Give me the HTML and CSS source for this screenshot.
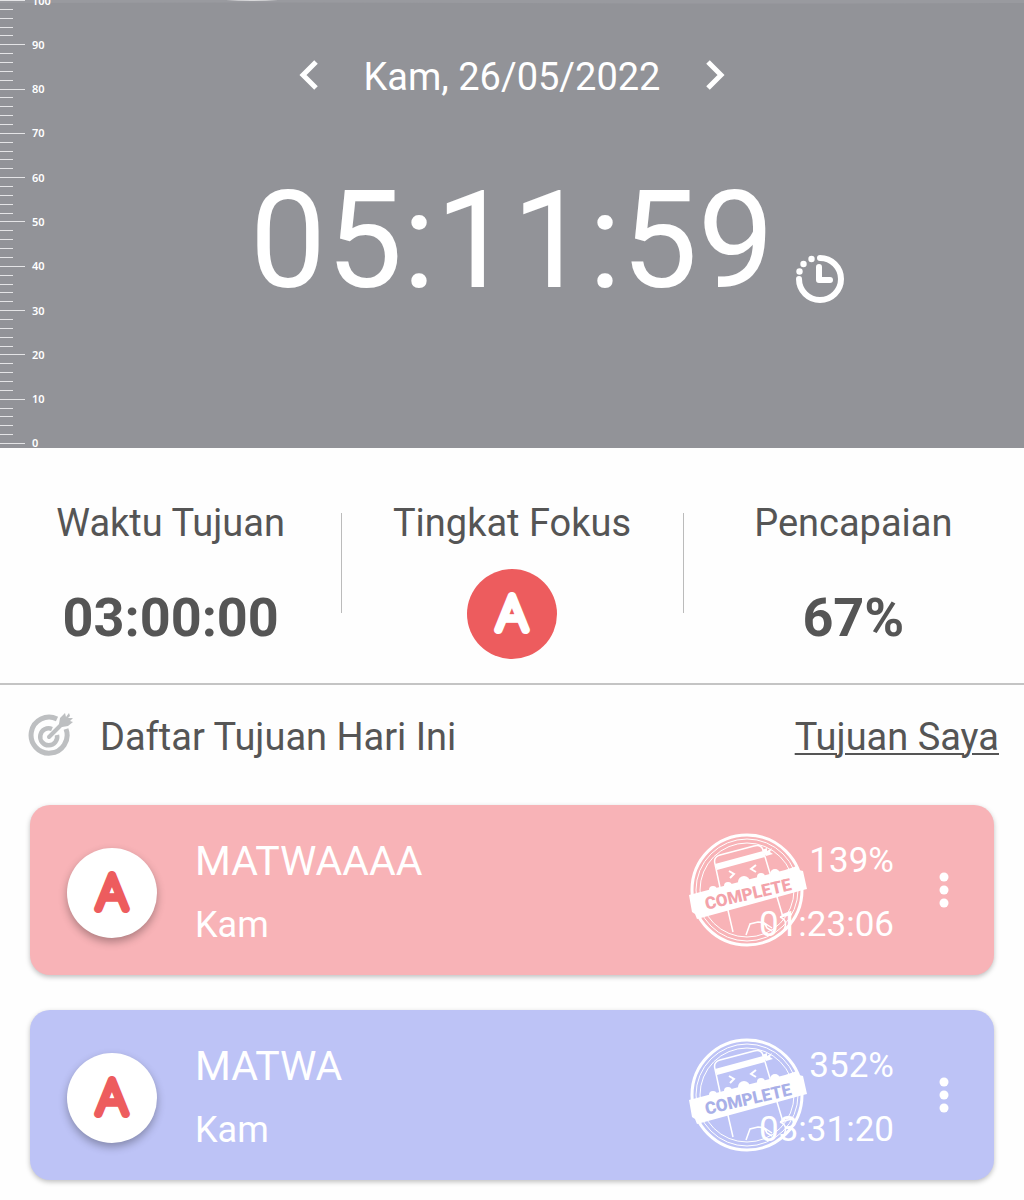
FILE: index.html
```html
<!DOCTYPE html>
<html lang="id">

<head>
    <meta charset="utf-8">
    <meta name="viewport" content="width=device-width, initial-scale=1">
    <title>Tujuan Hari Ini</title>
    <link rel="stylesheet" href="styles.css">
</head>

<body>
    <!-- shared drawings -->
    <svg class="sprite" aria-hidden="true">
        <symbol id="stamp" viewBox="0 0 120 120">
            <g fill="none" stroke="#fff">
                <circle cx="60" cy="60" r="55" stroke-width="3" />
                <circle cx="60" cy="60" r="51" stroke-width="1" />
                <circle cx="60" cy="60" r="47" stroke-width="1" />
                <path d="M34 62 L28 34 Q26 27 33 25 L67 16 Q74 14 76 20 L96 87 M40 76 L46 102 M93 87 L105 84" stroke-width="1.5" />
                <path d="M42 41 l5 3 -4 4 M69 35 l-5 4 5 3" stroke-width="2" />
                <path d="M59 105 l4 -11 8 -2 q7 0 9 6 l5 3 M76 92 l9 6 M93 87 q10 4 2 16" stroke-width="1.5" />
            </g>
            <path d="M28 34 L76 21 78 27 30 40 Z M75 20 l5 -2 0 3 5 -3 -2 4 3 2 -7 2 Z" fill="#fff" />
            <g fill="#fff">
                <circle cx="26" cy="60" r="4" />
                <circle cx="41" cy="56" r="4" />
                <circle cx="57" cy="52" r="6" />
                <circle cx="74" cy="47" r="4" />
                <circle cx="88" cy="44" r="5" />
                <path d="M2 65 L98 40 110 36 112 40 116 41 120 59 116 60 98 65 10 89 8 84 5 82 Z" />
            </g>
            <text class="stamp-text" x="61" y="70" text-anchor="middle" transform="rotate(-13 61 64)">COMPLETE</text>
        </symbol>
        <symbol id="dots" viewBox="0 0 12 36">
            <circle cx="6" cy="5" r="4.500" />
            <circle cx="6" cy="18" r="4.500" />
            <circle cx="6" cy="31" r="4.500" />
        </symbol>
    </svg>

    <header class="timer-panel">
        <svg class="wave" viewBox="0 0 1024 4" preserveAspectRatio="none" aria-hidden="true">
            <path d="M0 0 H1024 V3 Q700 4 500 3 T0 3 Z" fill="#999a9f" />
            <path d="M226 0 H278 Q250 2 226 0 Z" fill="#d8d8da" />
        </svg>
        <div class="ruler" id="ruler"></div>
        <div class="date-row">
            <button type="button" class="arrow" aria-label="Hari sebelumnya">
                <svg width="20" height="30" viewBox="0 0 20 30"><path d="M18 2 L5 15 L18 28" /></svg>
            </button>
            <span class="date">Kam, 26/05/2022</span>
            <button type="button" class="arrow" aria-label="Hari berikutnya">
                <svg width="20" height="30" viewBox="0 0 20 30"><path d="M2 2 L15 15 L2 28" /></svg>
            </button>
        </div>
        <div class="clock-row">
            <span class="clock">05:11:59</span>
            <button type="button" class="clock-button" aria-label="Riwayat waktu">
                <svg width="48" height="48" viewBox="0 0 48 48">
                    <path d="M24 3 A21 21 0 1 1 3 24" />
                    <path d="M23 12 V25 H34" />
                    <circle cx="15.500" cy="4" r="3.200" />
                    <circle cx="7.500" cy="9" r="3.200" />
                    <circle cx="3.500" cy="16.500" r="3.200" />
                </svg>
            </button>
        </div>
    </header>

    <main>
        <section class="stats">
            <div class="stat">
                <span class="stat-label">Waktu Tujuan</span>
                <span class="stat-value">03:00:00</span>
            </div>
            <div class="stat">
                <span class="stat-label">Tingkat Fokus</span>
                <svg class="grade grade-red" viewBox="0 0 90 90"><text x="45" y="61">A</text></svg>
            </div>
            <div class="stat">
                <span class="stat-label">Pencapaian</span>
                <span class="stat-value">67%</span>
            </div>
        </section>

        <section class="goals">
            <div class="goals-head">
                <svg class="target" width="46" height="46" viewBox="0 0 46 46" aria-hidden="true">
                    <path d="M29 7 A18 18 0 1 0 38 17" stroke-width="5" />
                    <path d="M24 17 A8.500 8.500 0 1 0 29 23" stroke-width="4.500" />
                    <path d="M21 25 L36 10" stroke-width="4" stroke-linecap="round" />
                    <path class="feather" d="M31 12 L32 6 37 1 38 5 41 1 42 4 40 6 45 6 42 9 45 10 40 14 34 15 Z" />
                </svg>
                <h1>Daftar Tujuan Hari Ini</h1>
                <a href="#">Tujuan Saya</a>
            </div>

            <article class="goal goal-pink">
                <svg class="stamp"><use href="#stamp" /></svg>
                <svg class="grade grade-white" viewBox="0 0 90 90"><text x="45" y="61">A</text></svg>
                <div class="goal-name">
                    <h2>MATWAAAA</h2>
                    <span>Kam</span>
                </div>
                <div class="goal-result">
                    <span>139%</span>
                    <span>01:23:06</span>
                </div>
                <button type="button" class="more" aria-label="Menu MATWAAAA">
                    <svg width="12" height="36"><use href="#dots" /></svg>
                </button>
            </article>

            <article class="goal goal-blue">
                <svg class="stamp"><use href="#stamp" /></svg>
                <svg class="grade grade-white" viewBox="0 0 90 90"><text x="45" y="61">A</text></svg>
                <div class="goal-name">
                    <h2>MATWA</h2>
                    <span>Kam</span>
                </div>
                <div class="goal-result">
                    <span>352%</span>
                    <span>03:31:20</span>
                </div>
                <button type="button" class="more" aria-label="Menu MATWA">
                    <svg width="12" height="36"><use href="#dots" /></svg>
                </button>
            </article>
        </section>
    </main>

    <script src="ruler.js"></script>
</body>

</html>
```
FILE: styles.css
```css
* {
    box-sizing: border-box;
}

body {
    margin: 0;
    background-color: #fefefe;
    color: #555;
    font-family: Roboto, "Noto Sans", sans-serif;
}

button {
    display: flex;
    padding: 0;
    border: none;
    background: none;
    cursor: pointer;
}

h1, h2 {
    margin: 0;
    font-weight: 400;
}

.sprite {
    position: absolute;
    width: 0;
    height: 0;
}

/* timer */
.timer-panel {
    position: relative;
    padding: 53px 0 127px;
    overflow: hidden;
    background-color: #929398;
    color: #fff;
}

.wave {
    position: absolute;
    top: 0;
    left: 0;
    width: 100%;
    height: 4px;
}

.ruler {
    position: absolute;
    top: 0;
    bottom: 4px;
    left: 0;
    display: flex;
    flex-direction: column;
    justify-content: space-between;
}

.tick {
    display: flex;
    align-items: center;
    width: 13px;
    height: 1px;
    background-color: #e4e4e6;
}

.tick-major {
    width: 25px;
}

.tick-major span {
    margin-left: 32px;
    font: 600 11px/12px "Noto Sans", sans-serif;
}

.date-row {
    display: flex;
    align-items: center;
    justify-content: center;
    gap: 46px;
}

.arrow {
    height: 48px;
    padding-bottom: 4px;
    align-items: center;
}

.arrow path {
    fill: none;
    stroke: #fff;
    stroke-width: 5;
}

.date {
    font-size: 38px;
    line-height: 48px;
}

.clock-row {
    display: grid;
    grid-template-columns: 1fr auto 1fr;
    align-items: end;
    column-gap: 22px;
    margin-top: 60px;
}

.clock {
    grid-column: 2;
    font-size: 136px;
    line-height: 160px;
}

.clock-button {
    margin-bottom: 18px;
}

.clock-button path {
    fill: none;
    stroke: #fff;
    stroke-width: 6;
    stroke-linecap: round;
    stroke-linejoin: round;
}

.clock-button circle {
    fill: #fff;
}

/* summary */
.stats {
    display: grid;
    grid-template-columns: repeat(3, 1fr);
    padding: 51px 0 24px;
    border-bottom: 2px solid #c4c4c4;
}

.stat {
    position: relative;
    display: flex;
    flex-direction: column;
    align-items: center;
    gap: 22px;
}

.stat + .stat::before {
    content: "";
    position: absolute;
    top: 14px;
    left: 0;
    width: 1px;
    height: 100px;
    background-color: #bbb;
}

.stat-label {
    font-size: 38px;
    line-height: 48px;
}

.stat-value {
    padding-top: 8px;
    font-weight: 700;
    font-size: 54px;
    line-height: 82px;
}

.grade {
    flex: none;
    width: 90px;
    height: 90px;
    border-radius: 50%;
}

.grade text {
    font-family: Lato, sans-serif;
    font-size: 47px;
    font-weight: 100;
    text-anchor: middle;
    stroke-width: 8;
    stroke-linejoin: round;
}

.grade-red {
    background-color: #ed5c5e;
    fill: #fff;
    stroke: #fff;
}

.grade-white {
    background-color: #fff;
    fill: #ed5c5e;
    stroke: #ed5c5e;
    box-shadow: 0 4px 8px rgba(0, 0, 0, .3);
}

/* goals */
.goals {
    display: flex;
    flex-direction: column;
    gap: 35px;
    padding: 25px 30px 21px;
}

.goals-head {
    display: flex;
    align-items: center;
    padding-bottom: 10px;
    margin: 0 -5px 0 -2px;
}

.goals-head h1,
.goals-head a {
    padding-top: 4px;
    font-size: 38px;
    line-height: 46px;
}

.goals-head h1 {
    flex: 1;
    margin-left: 26px;
}

.goals-head a {
    color: #555;
    text-decoration-thickness: 2px;
    text-underline-offset: 3px;
}

.target path {
    fill: none;
    stroke: #bdbfc1;
}

.target .feather {
    fill: #bdbfc1;
    stroke: none;
}

.goal {
    position: relative;
    display: flex;
    align-items: center;
    height: 170px;
    padding: 6px 44px 0 37px;
    border-radius: 20px;
    color: #fff;
    box-shadow: 0 2px 5px rgba(0, 0, 0, .25);
}

.goal-pink {
    background-color: #f8b3b7;
}

.goal-blue {
    background-color: #bdc3f6;
}

.stamp {
    position: absolute;
    top: 25px;
    right: 187px;
    width: 120px;
    height: 120px;
}

.stamp-text {
    font-size: 17px;
    font-weight: 900;
}

.goal-pink .stamp {
    fill: #f3a3aa;
}

.goal-blue .stamp {
    fill: #a9b0e8;
}

.goal-name {
    flex: 1;
    margin-left: 38px;
    font-size: 36px;
    line-height: 64px;
}

.goal-name h2 {
    font-size: 41px;
}

.goal-result {
    position: relative;
    display: flex;
    flex-direction: column;
    align-items: flex-end;
    font-size: 35px;
    line-height: 64px;
}

.more {
    margin-left: 44px;
    padding-bottom: 6px;
    fill: #fff;
}
```
FILE: ruler.js
```
// ruler from 100 down to 0, a labelled tick every 10
var ruler = document.getElementById('ruler');

for (var value = 100; value >= 0; value -= 2) {
    var tick = document.createElement('div');
    tick.className = 'tick';

    if (value % 10 === 0) {
        tick.className = 'tick tick-major';
        tick.innerHTML = '<span>' + value + '</span>';
    }
    ruler.appendChild(tick);
}
```
